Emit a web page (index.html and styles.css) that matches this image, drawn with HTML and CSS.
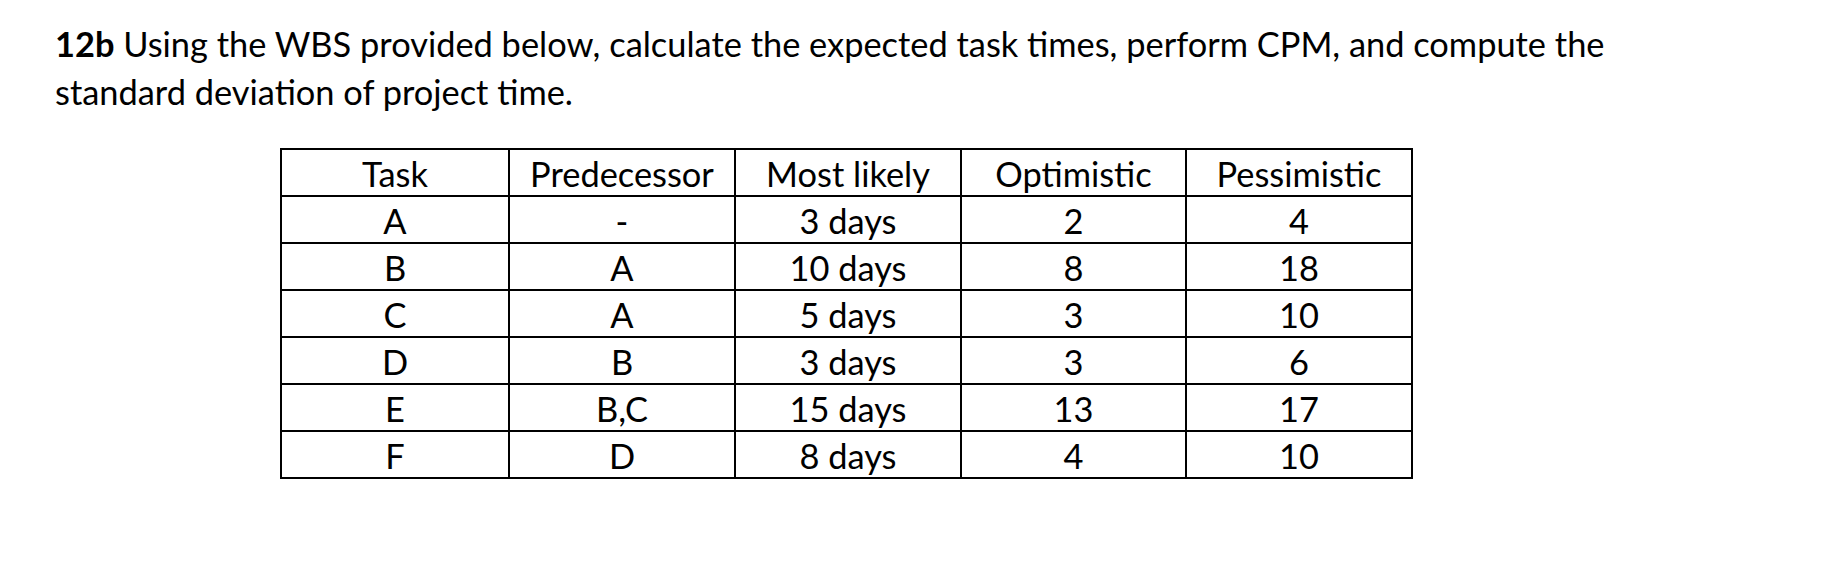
FILE: index.html
```html
<!DOCTYPE html>
<html lang="en">
<head>
<meta charset="utf-8">
<title>12b WBS</title>
<link rel="stylesheet" href="styles.css">
</head>
<body>
<main class="page">
  <p class="question"><strong>12b</strong> Using the WBS provided below, calculate the expected task times, perform CPM, and compute the<br>standard deviation of project time.</p>
  <table class="wbs">
    <colgroup>
      <col class="c1"><col class="c2"><col class="c3"><col class="c4"><col class="c5">
    </colgroup>
    <tbody>
      <tr><td>Task</td><td>Predecessor</td><td>Most likely</td><td>Optimistic</td><td>Pessimistic</td></tr>
      <tr><td>A</td><td>-</td><td>3 days</td><td>2</td><td>4</td></tr>
      <tr><td>B</td><td>A</td><td>10 days</td><td>8</td><td>18</td></tr>
      <tr><td>C</td><td>A</td><td>5 days</td><td>3</td><td>10</td></tr>
      <tr><td>D</td><td>B</td><td>3 days</td><td>3</td><td>6</td></tr>
      <tr><td>E</td><td>B,C</td><td>15 days</td><td>13</td><td>17</td></tr>
      <tr><td>F</td><td>D</td><td>8 days</td><td>4</td><td>10</td></tr>
    </tbody>
  </table>
</main>
</body>
</html>
```
FILE: styles.css
```css
html, body {
  margin: 0;
  padding: 0;
  background: #fff;
}
.page {
  padding: 20px 0 0 55px;
  font-family: Lato, "Open Sans", sans-serif;
  font-size: 34.4px;
  color: #000;
}
.question {
  margin: 0;
  line-height: 48px;
  white-space: nowrap;
}
.question strong {
  font-weight: 700;
}
.wbs {
  margin: 32px 0 0 225px;
  border-collapse: separate;
  border-spacing: 0;
  table-layout: fixed;
  width: 1133px;
  border-top: 2px solid #000;
  border-left: 2px solid #000;
}
.c1 { width: 228px; }
.c2 { width: 226px; }
.c3 { width: 226px; }
.c4 { width: 225px; }
.c5 { width: 226px; }
.wbs td {
  box-sizing: border-box;
  height: 47px;
  padding: 1px 0 0 0;
  border-right: 2px solid #000;
  border-bottom: 2px solid #000;
  text-align: center;
  vertical-align: middle;
  line-height: normal;
  white-space: nowrap;
}
```
